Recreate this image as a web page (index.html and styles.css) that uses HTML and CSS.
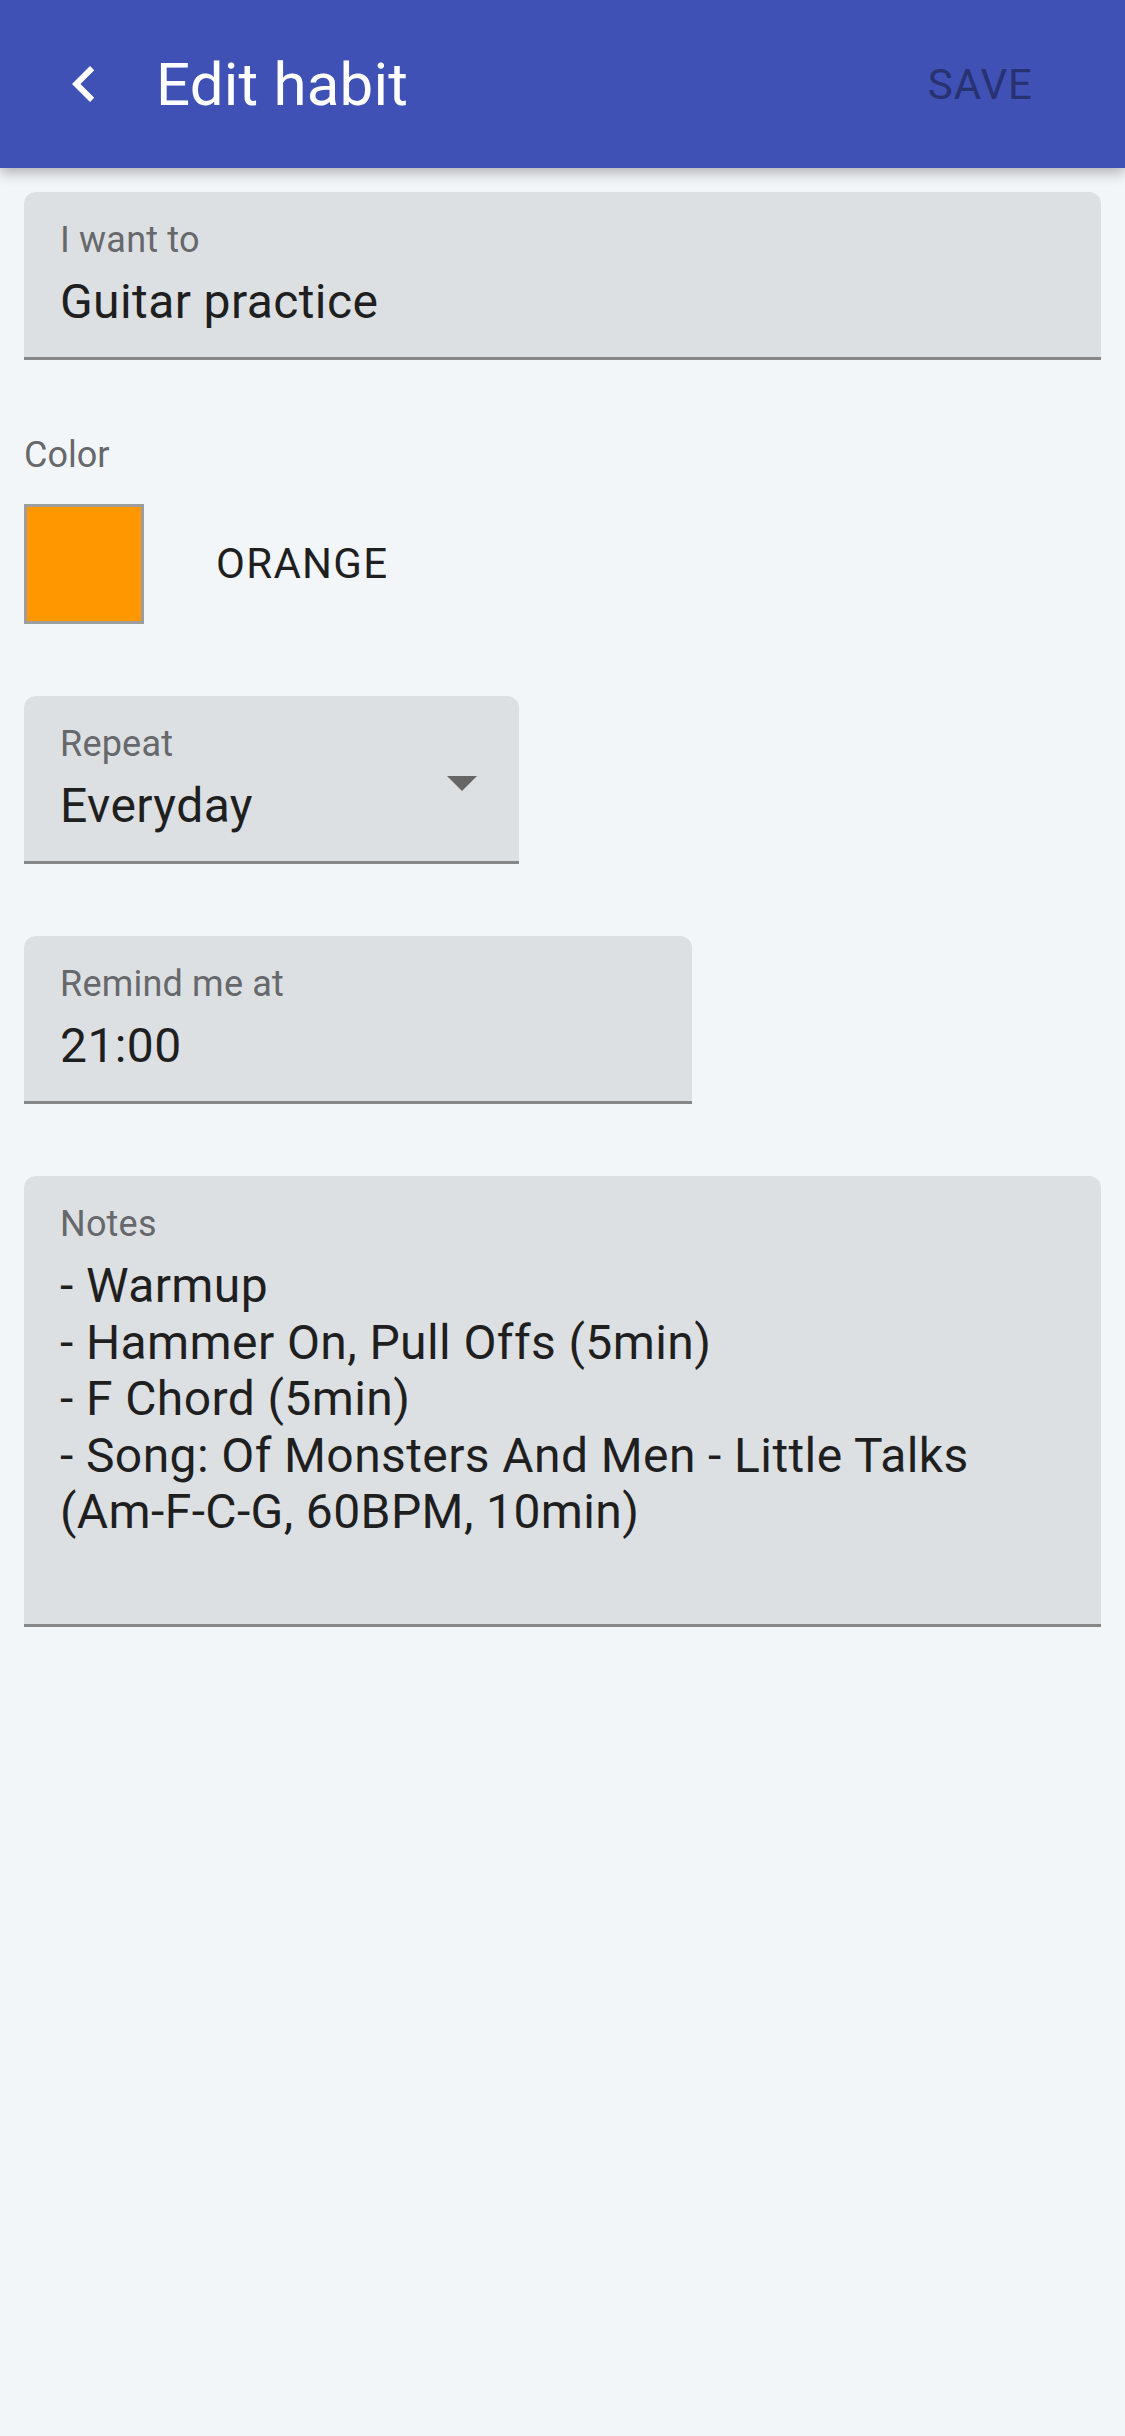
FILE: index.html
```html
<!DOCTYPE html>
<html>
<head>
<meta charset="utf-8">
<link rel="stylesheet" href="styles.css">
</head>
<body>
<header class="appbar">
  <svg class="back" viewBox="0 0 24 24" width="72" height="72"><path fill="#fff" d="M15.41 7.41L14 6l-6 6 6 6 1.41-1.41L10.83 12z"/></svg>
  <h1 class="title">Edit habit</h1>
  <span class="save">SAVE</span>
</header>
<main class="content">
  <div class="field full">
    <div class="field-text">
      <div class="label">I want to</div>
      <div class="value">Guitar practice</div>
    </div>
  </div>

  <div class="color-section">
    <div class="color-label">Color</div>
    <div class="color-row">
      <div class="swatch"></div>
      <span class="color-name">ORANGE</span>
    </div>
  </div>

  <div class="field repeat">
    <div class="field-text">
      <div class="label">Repeat</div>
      <div class="value">Everyday</div>
    </div>
    <svg class="drop" viewBox="0 0 24 24" width="72" height="72"><path fill="#666" d="M7 10l5 5 5-5z"/></svg>
  </div>

  <div class="field remind">
    <div class="field-text">
      <div class="label">Remind me at</div>
      <div class="value">21:00</div>
    </div>
  </div>

  <div class="field full notes">
    <div class="field-text">
      <div class="label">Notes</div>
      <div class="value multiline">- Warmup<br>- Hammer On, Pull Offs (5min)<br>- F Chord (5min)<br>- Song: Of Monsters And Men - Little Talks<br>(Am-F-C-G, 60BPM, 10min)</div>
    </div>
  </div>
</main>
</body>
</html>
```
FILE: styles.css
```css
html, body {
  margin: 0;
  padding: 0;
}
body {
  width: 1125px;
  min-height: 2436px;
  background: #f3f6f9;
  font-family: Roboto, "Liberation Sans", sans-serif;
  color: #1f1f1f;
}
.appbar {
  position: relative;
  z-index: 2;
  height: 168px;
  background: #3f51b5;
  display: flex;
  align-items: center;
  box-shadow: 0 5px 12px rgba(0, 0, 0, 0.28);
}
.back {
  margin-left: 48px;
  flex: none;
}
.title {
  margin: 0 0 0 36px;
  font-size: 60px;
  font-weight: 400;
  color: #ffffff;
  flex: 1;
  letter-spacing: 0.2px;
}
.save {
  font-size: 42px;
  font-weight: 400;
  letter-spacing: 1px;
  color: #283271;
  margin-right: 92px;
}
.content {
  padding: 24px 24px 0;
  display: flex;
  flex-direction: column;
  align-items: flex-start;
}
.field {
  box-sizing: border-box;
  background: #dde0e3;
  border-radius: 12px 12px 0 0;
  border-bottom: 3px solid #878787;
  padding: 30px 0 27px 36px;
  display: flex;
  align-items: center;
}
.field-text {
  flex: 1;
}
.full {
  width: 1077px;
}
.repeat {
  width: 495px;
  margin-top: 72px;
}
.remind {
  width: 668px;
  margin-top: 72px;
}
.notes {
  margin-top: 72px;
  padding-bottom: 83px;
}
.label {
  font-size: 36px;
  line-height: 36px;
  color: #66686b;
  letter-spacing: 0.2px;
}
.value {
  margin-top: 16px;
  font-size: 48px;
  line-height: 56px;
  color: #1f1f1f;
  letter-spacing: 0.4px;
}
.multiline {
  line-height: 56.5px;
}
.drop {
  flex: none;
  margin-right: 21px;
  margin-top: 3px;
}
.color-section {
  margin-top: 77px;
}
.color-label {
  font-size: 36px;
  line-height: 36px;
  color: #66686b;
}
.color-row {
  margin-top: 31px;
  display: flex;
  align-items: center;
}
.swatch {
  box-sizing: border-box;
  width: 120px;
  height: 120px;
  background: #ff9800;
  border: 3px solid #9e9e9e;
}
.color-name {
  margin-left: 72px;
  font-size: 42px;
  line-height: 42px;
  letter-spacing: 1.3px;
  color: #1f1f1f;
}
```
